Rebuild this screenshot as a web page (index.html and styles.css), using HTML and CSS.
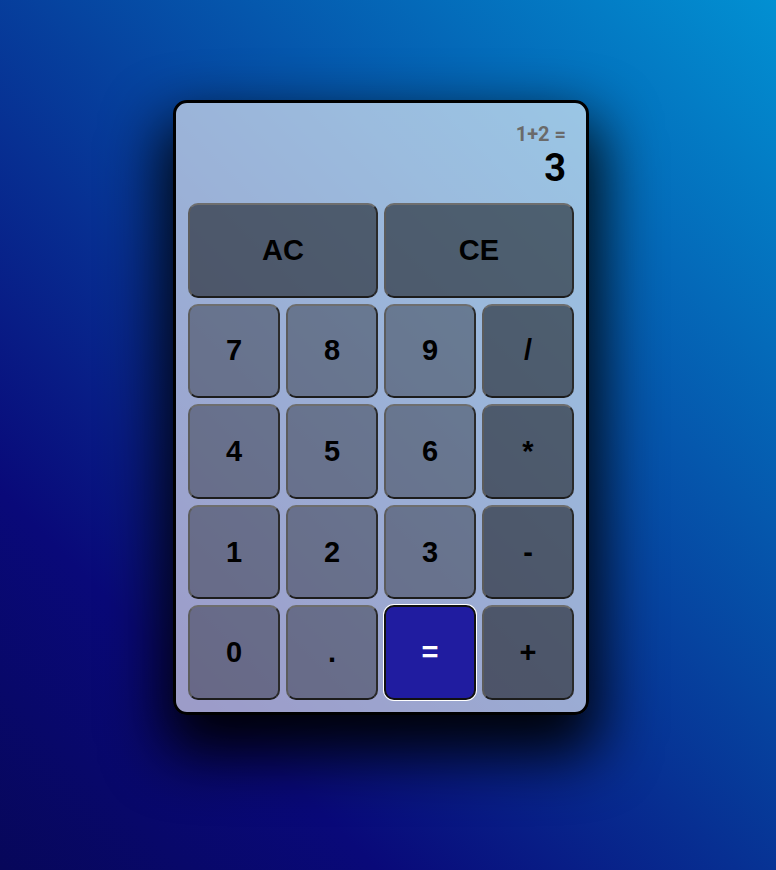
FILE: index.html
```html
<!DOCTYPE html>
<html lang="en">
<head>
<meta charset="utf-8">
<title>Calculator</title>
<link rel="stylesheet" href="styles.css">
</head>
<body>
  <div class="calculator">
    <div class="display">
      <div class="previous">1+2 =</div>
      <div class="current">3</div>
    </div>
    <button class="key span-two op">AC</button>
    <button class="key span-two op">CE</button>
    <button class="key">7</button>
    <button class="key">8</button>
    <button class="key">9</button>
    <button class="key op">/</button>
    <button class="key">4</button>
    <button class="key">5</button>
    <button class="key">6</button>
    <button class="key op">*</button>
    <button class="key">1</button>
    <button class="key">2</button>
    <button class="key">3</button>
    <button class="key op">-</button>
    <button class="key">0</button>
    <button class="key">.</button>
    <button class="key equals">=</button>
    <button class="key op">+</button>
  </div>
</body>
</html>
```
FILE: styles.css
```css
* {
  box-sizing: border-box;
}

html, body {
  margin: 0;
  min-height: 100%;
}

body {
  min-height: 870px;
  background: linear-gradient(45deg, #07075a 0%, #090979 23%, #0290d2 100%);
  font-family: Roboto, "Liberation Sans", sans-serif;
  display: flex;
  justify-content: center;
  align-items: flex-start;
  padding: 100px 14px 0 0;
}

.calculator {
  width: 416px;
  border: 3px solid #000;
  border-radius: 14px;
  background: rgba(255, 255, 255, 0.6);
  box-shadow: 0 30px 60px 10px rgba(0, 0, 0, 0.95);
  padding: 12px;
  display: grid;
  grid-template-columns: repeat(4, 92px);
  grid-template-rows: 82px repeat(5, 94.6px);
  gap: 6px;
}

.display {
  grid-column: 1 / -1;
  display: flex;
  flex-direction: column;
  align-items: flex-end;
  justify-content: flex-end;
  gap: 5px;
  padding: 0 8px 10px 0;
}

.previous {
  font-size: 20px;
  line-height: 1;
  font-weight: 700;
  color: #6a6a6a;
}

.current {
  font-size: 38px;
  line-height: 1;
  font-weight: 700;
  color: #000;
}

.key {
  font-family: "Liberation Sans", Arial, sans-serif;
  font-size: 29px;
  font-weight: 700;
  color: #000;
  background: rgba(0, 0, 0, 0.33);
  border: 2px solid;
  border-color: #6e6e6e #2a2a2a #1c1c1c #5c5c5c;
  border-radius: 10px;
  padding: 0;
  margin: 0;
  cursor: pointer;
}

.key.op {
  background: rgba(0, 0, 0, 0.5);
}

.span-two {
  grid-column: span 2;
}

.key.equals {
  background: #201ca0;
  color: #fff;
  border-color: #111;
  box-shadow: 0 0 0 1px #fff;
}
```
